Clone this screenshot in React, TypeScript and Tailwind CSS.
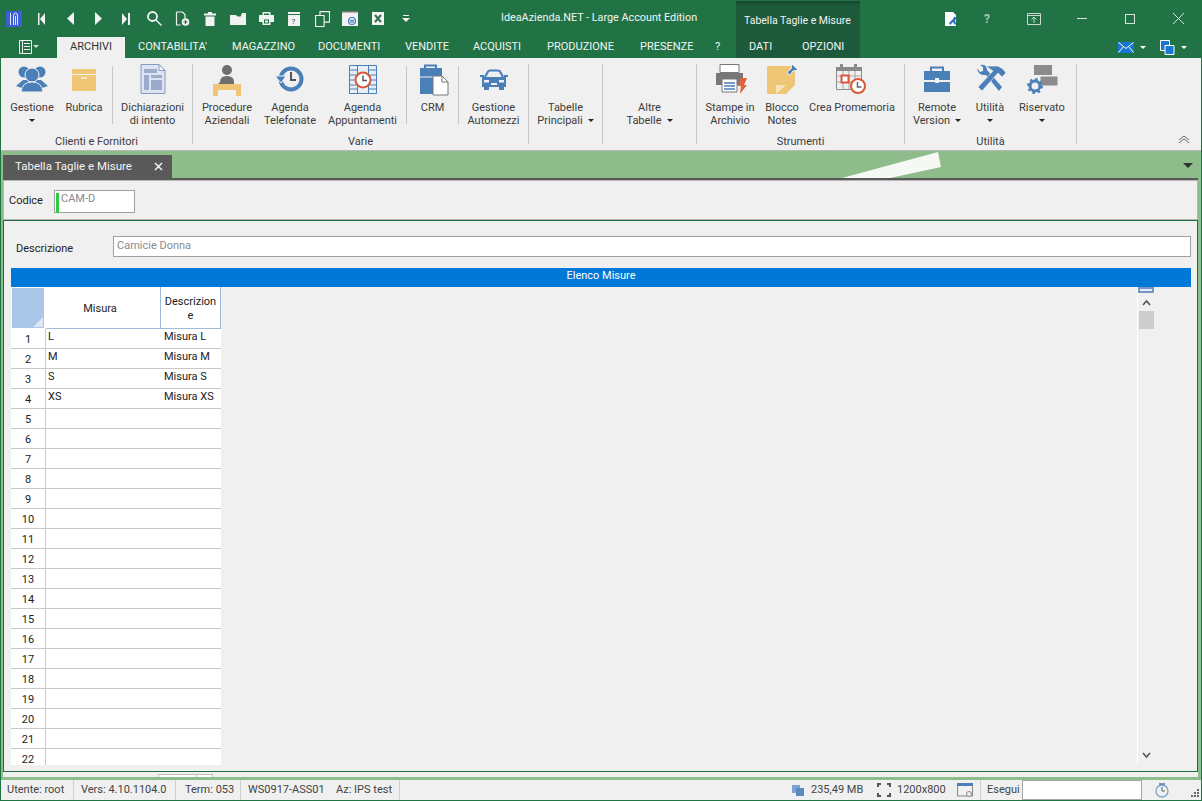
import type { ReactNode } from "react";

const font = "font-['Roboto',sans-serif]";

function Arrow({ className = "" }: { className?: string }) {
  return (
    <span
      className={`inline-block h-0 w-0 border-x-[3px] border-t-[3px] border-x-transparent border-t-[#222] ${className}`}
    />
  );
}

function Slot({ children }: { children: ReactNode }) {
  return <div className="flex h-[37px] w-[28px] items-center justify-center">{children}</div>;
}

function W({ children, w = 20, h = 20 }: { children: ReactNode; w?: number; h?: number }) {
  return (
    <svg width={w} height={h} viewBox={`0 0 ${w} ${h}`} fill="#f2f2f2">
      {children}
    </svg>
  );
}

function TitleIcons() {
  return (
    <>
      <Slot>
        <W w={8} h={14}>
          <path d="M0 1h1.500v12H0zM7 1v12L2 7z" />
        </W>
      </Slot>
      <Slot>
        <W w={7} h={13}>
          <path d="M7 0v13L0 6.500z" />
        </W>
      </Slot>
      <Slot>
        <W w={7} h={13}>
          <path d="M0 0v13l7-6.500z" />
        </W>
      </Slot>
      <Slot>
        <W w={8} h={14}>
          <path d="M0 1v12l5-6zM6 1h2v12H6z" />
        </W>
      </Slot>
      <Slot>
        <W w={15} h={15}>
          <circle cx="5.500" cy="5.500" r="4.500" fill="none" stroke="#f2f2f2" strokeWidth="1.800" />
          <path d="M8.500 9.500l1-1 5.500 5.500-1 1z" />
        </W>
      </Slot>
      <Slot>
        <W w={15} h={15}>
          <path d="M1.500 1h6l2.500 2.500v4M1.500 1v13h4" fill="none" stroke="#f2f2f2" strokeWidth="1.200" />
          <circle cx="10.500" cy="11" r="3.800" />
          <path d="M10.500 9v4M8.500 11h4" stroke="#217346" strokeWidth="1.100" />
        </W>
      </Slot>
      <Slot>
        <W w={12} h={14}>
          <path d="M4 0h4v1.500h4V3.500H0V1.500h4zM1.500 4.500h9V14h-9z" />
        </W>
      </Slot>
      <Slot>
        <W w={16} h={13}>
          <path d="M0 3h6l1.500 1.500h3L12 1h4v12H0z" />
        </W>
      </Slot>
      <Slot>
        <W w={15} h={13}>
          <path d="M3.500 0h8v3H15v7h-3.500v3h-8v-3H0V3h3.500z" />
          <path d="M5 1.500h5V3H5zM5 7.500h5v4H5z" fill="#217346" />
          <path d="M6 8.500h3v2H6z" />
        </W>
      </Slot>
      <Slot>
        <W w={14} h={15}>
          <path d="M1 1h12v14H1z" />
          <path d="M1 3h12v1H1z" fill="#217346" />
          <text x="4.500" y="13" fontSize="8" fill="#444">?</text>
        </W>
      </Slot>
      <Slot>
        <W w={15} h={16}>
          <path d="M.6 4.500h8.500v11H.6zM5 4V.6h5.500l4 0v10.500H9.500" fill="none" stroke="#f2f2f2" strokeWidth="1.100" />
        </W>
      </Slot>
      <Slot>
        <W w={16} h={15}>
          <path d="M0 0h16v15H0z" />
          <path d="M0 0h16v1.500H0z" fill="#777" />
          <circle cx="10" cy="10" r="3.500" fill="#dce8f5" stroke="#4a7fb8" strokeWidth="1.200" />
          <path d="M8 9.500h4M8 11h4" stroke="#4a7fb8" />
        </W>
      </Slot>
      <Slot>
        <W w={12} h={13}>
          <path d="M0 0h12v13H0z" />
          <path d="M3 3l6 7M9 3l-6 7" stroke="#2f6e4e" strokeWidth="2" />
        </W>
      </Slot>
      <Slot>
        <W w={8} h={8}>
          <path d="M1 0h6v1H1zM0 3h8L4 7z" />
        </W>
      </Slot>
    </>
  );
}

const tabs = [
  { label: "CONTABILITA'", w: "w-[94px]" },
  { label: "MAGAZZINO", w: "w-[86px]" },
  { label: "DOCUMENTI", w: "w-[87px]" },
  { label: "VENDITE", w: "w-[68px]" },
  { label: "ACQUISTI", w: "w-[74px]" },
  { label: "PRODUZIONE", w: "w-[93px]" },
  { label: "PRESENZE", w: "w-[75px]" },
  { label: "?", w: "w-[8px]" },
];

function Header() {
  return (
    <div className="flex h-[58px] bg-[#217346] text-[11px] text-[#f3f3f3]">
      <div className="w-[736px]">
        <div className="flex h-[37px] items-center">
          <div className="ml-[6px] flex h-[16px] w-[16px] items-center justify-center bg-[#3d5fd6]">
            <svg width="12" height="14" viewBox="0 0 12 14" fill="none" stroke="#dfe6ff" strokeWidth="1">
              <path d="M2.500 1v12M5.500 13V4q0-3 2-3t2 3v9M7.500 4v9" />
            </svg>
          </div>
          <div className="ml-[6px] flex">
            <TitleIcons />
          </div>
          <span className="ml-[81px] whitespace-nowrap text-[10.8px]">IdeaAzienda.NET - Large Account Edition</span>
        </div>
        <div className="flex h-[21px] items-end">
          <div className="ml-[19px] flex h-[21px] w-[38px] items-center gap-[1px] pb-[2px]">
            <svg width="13" height="14" viewBox="0 0 13 14" fill="none" stroke="#f2f2f2">
              <path d="M.5.5h12v13H.5zM3.500 0v14M5 3.500h6M5 6.500h6M5 9.500h6" />
            </svg>
            <Arrow className="border-t-[#cfe0d6]" />
          </div>
          <div className="flex h-[21px] w-[68px] items-center justify-center bg-[#f0f0f0] text-[#333]">ARCHIVI</div>
          <div className="ml-[13px] flex h-[21px] items-center">
            {tabs.map((t) => (
              <span key={t.label} className={`${t.w} whitespace-nowrap`}>
                {t.label}
              </span>
            ))}
          </div>
        </div>
      </div>
      <div className="mt-[1px] w-[124px] border-t-[3px] border-[#174f33] bg-[#1d5a3b]">
        <div className="flex h-[33px] items-center whitespace-nowrap pl-[8px] text-[10.5px]">Tabella Taglie e Misure</div>
        <div className="flex h-[21px] items-center pl-[13px]">
          <span className="w-[53px]">DATI</span>
          <span>OPZIONI</span>
        </div>
      </div>
      <div className="flex-1">
        <div className="flex h-[37px] items-center">
          <div className="ml-[77px] flex w-[28px] justify-center">
            <svg width="14" height="16" viewBox="0 0 14 16">
              <path d="M1 1h8l3 3v11H1z" fill="#fff" />
              <path d="M5 12l4-4 1-2 3 0-1 2-1 1 1 4-1 1-2-3-3 3z" fill="#2f6fc4" />
            </svg>
          </div>
          <span className="ml-[8px] flex w-[28px] justify-center text-[12px] font-bold text-[#a9c8b6]">?</span>
          <div className="ml-[19px] flex w-[28px] justify-center">
            <svg width="14" height="12" viewBox="0 0 14 12" fill="none" stroke="#c7dccf">
              <path d="M.5.5h13v11H.5zM.5 2.500h13M7 10V4M4.500 6.500L7 4l2.500 2.500" />
            </svg>
          </div>
          <div className="ml-[10px] flex">
            <div className="flex h-[30px] w-[48px] items-center justify-center">
              <span className="h-px w-[10px] bg-[#d5e6db]" />
            </div>
            <div className="flex h-[30px] w-[48px] items-center justify-center">
              <span className="h-[10px] w-[10px] border border-[#d5e6db]" />
            </div>
            <div className="flex h-[30px] w-[48px] items-center justify-center">
              <svg width="11" height="11" viewBox="0 0 11 11" stroke="#d5e6db">
                <path d="M0 0l11 11M11 0L0 11" />
              </svg>
            </div>
          </div>
        </div>
        <div className="flex h-[21px] items-start pl-[258px] pt-[5px]">
          <svg width="16" height="11" viewBox="0 0 16 11">
            <path d="M0 0h16v11H0z" fill="#1777d1" />
            <path d="M.5.5l7.500 6 7.500-6M.5 10.500l5-6M15.500 10.500l-5-6" fill="none" stroke="#fff" />
          </svg>
          <Arrow className="ml-[6px] mt-[4px] border-t-white" />
          <svg className="ml-[14px] -mt-[2px]" width="15" height="15" viewBox="0 0 15 15">
            <path d="M.5.5h9v10h-9z" fill="#1777d1" stroke="#fff" />
            <path d="M5 5.500h9v9H5z" fill="#1777d1" stroke="#fff" />
          </svg>
          <Arrow className="ml-[6px] mt-[4px] border-t-white" />
        </div>
      </div>
    </div>
  );
}

const blue = "#4a7fb8";
const gold = "#efc676";

function Svg({ children }: { children: ReactNode }) {
  return (
    <svg width="34" height="34" viewBox="0 0 34 34">
      {children}
    </svg>
  );
}

const icons: Record<string, ReactNode> = {
  gestione: (
    <Svg>
      <circle cx="9" cy="10" r="5.500" fill={blue} />
      <circle cx="25" cy="10" r="5.500" fill={blue} />
      <path d="M1 24l7-6h18l7 6-6 2H7z" fill={blue} />
      <circle cx="17" cy="13" r="7" fill={blue} stroke="#f0f0f0" />
      <path d="M6 30q1-10 11-10t11 10z" fill={blue} stroke="#f0f0f0" />
    </Svg>
  ),
  rubrica: (
    <Svg>
      <path d="M5 7h24v5H5z" fill={gold} />
      <path d="M5 13h24v16H5z" fill={gold} />
      <path d="M14 15h6v2h-6z" fill="#f6e8c8" />
    </Svg>
  ),
  dichiarazioni: (
    <Svg>
      <path d="M5 2.500h18l6 6v23H5z" fill="#dde3f2" stroke="#8a9ac4" />
      <path d="M23 2.500v6h6z" fill="#fff" stroke="#8a9ac4" />
      <path d="M8 7h13v4H8zM8 13h5v15H8zM15 13h11v3H15zM15 18h11v10H15z" fill="#9cabcc" />
    </Svg>
  ),
  procedure: (
    <Svg>
      <circle cx="17" cy="8" r="5" fill="#6e6e6e" />
      <path d="M10 20q0-6 7-6t7 6v2H8z" fill="#6e6e6e" />
      <path d="M3 22h28v12h-5v-6H8v6H3z" fill={gold} />
    </Svg>
  ),
  telefonate: (
    <Svg>
      <circle cx="18" cy="17" r="10.500" fill="none" stroke={blue} strokeWidth="4" />
      <path d="M2 14h11l-5 7z" fill={blue} stroke="#f0f0f0" />
      <path d="M18 10v8h5" fill="none" stroke="#555" strokeWidth="2" />
    </Svg>
  ),
  appuntamenti: (
    <Svg>
      <path d="M3.500 3.500h27v28h-27z" fill="#e8eef6" stroke={blue} />
      <path d="M3.500 8h8M3.500 13h8M3.500 18h8M3.500 23h8M3.500 27h8M22.500 8h8M22.500 13h8M22.500 18h8M22.500 23h8M22.500 27h8M11.500 3v29M22.500 3v29" stroke={blue} />
      <circle cx="17" cy="18" r="7.500" fill="#fff" stroke="#d9583a" strokeWidth="2" />
      <path d="M17 13.500V18.500h4" fill="none" stroke="#555" strokeWidth="1.500" />
    </Svg>
  ),
  crm: (
    <Svg>
      <path d="M9 6V3.500h11V6" fill="none" stroke={blue} strokeWidth="2" />
      <path d="M4 6h22v26H4z" fill={blue} />
      <path d="M4 15h22" stroke="#f0f0f0" />
      <path d="M17 14h9l6 6v13H17z" fill="#fff" stroke="#777" />
      <path d="M26 14v6h6" fill="none" stroke="#777" />
    </Svg>
  ),
  auto: (
    <Svg>
      <path d="M8 15l3-5.500q.5-1 2-1h8q1.500 0 2 1l3 5.500" fill="none" stroke={blue} strokeWidth="2.200" />
      <path d="M3 13h4v2H3zM27 13h4v2h-4z" fill={blue} />
      <path d="M5 15h24v10H5z" fill={blue} />
      <path d="M7 25h5v3H7zM22 25h5v3h-5z" fill={blue} />
      <path d="M7 18h5v2.500H7zM22 18h5v2.500h-5zM14 21h6v2h-6z" fill="#f0f0f0" />
    </Svg>
  ),
  stampe: (
    <Svg>
      <path d="M7 2.500h19v8H7z" fill="#fff" stroke="#777" />
      <path d="M3 11h27v12H3z" fill="#777" />
      <path d="M9 17h15v13H9z" fill="#fff" stroke="#777" />
      <path d="M11 21h11M11 24h11M11 27h11" stroke={blue} strokeWidth="1.500" />
      <path d="M27 16h7l-3 7h3l-7 9 1-8h-3z" fill="#e0613c" />
    </Svg>
  ),
  blocco: (
    <Svg>
      <path d="M2 4h28v19l-9 9H2z" fill={gold} />
      <path d="M11 32v-9h10z" fill="#f7e4ba" />
      <path d="M22 10l4-3 1-5 6 6-5 1-3 4-1 0-2-3z" fill={blue} stroke="#f0f0f0" />
    </Svg>
  ),
  promemoria: (
    <Svg>
      <path d="M1.500 5.500h25v22h-25z" fill="none" stroke="#8a8a8a" />
      <path d="M1 5h26v4H1z" fill="#8a8a8a" />
      <path d="M5 2h3v5H5zM19 2h3v5h-3z" fill="#8a8a8a" />
      <path d="M8 9v19M14 9v19M20 9v19M1 14h26M1 20h26" stroke="#a5a5a5" />
      <path d="M6.500 13.500h7v7h-7z" fill="#fff" stroke="#d9583a" strokeWidth="2" />
      <circle cx="23" cy="24" r="7" fill="#fff" stroke="#d9583a" strokeWidth="2" />
      <path d="M22.500 20v5h4" fill="none" stroke="#666" strokeWidth="1.500" />
    </Svg>
  ),
  remote: (
    <Svg>
      <path d="M11 10V5.500h12V10" fill="none" stroke={blue} strokeWidth="2" />
      <path d="M4 9h26v9H4zM4 20h26v10H4z" fill={blue} />
      <path d="M15 16h4v5h-4z" fill="#f0f0f0" />
    </Svg>
  ),
  utilita: (
    <Svg>
      <path d="M4 6l3 4 3-1 0-4-3-2q7-1 7 5l15 17-3 4L13 13q-8 1-9-7z" fill={blue} />
      <path d="M14 4h11l5 3 3 4-4 4-4-4L9 29l-4-4L20 9l-6-4z" fill={blue} stroke="#f0f0f0" strokeWidth="0.700" />
    </Svg>
  ),
  riservato: (
    <Svg>
      <path d="M9 3h18v10H9z" fill="#8c8c8c" />
      <path d="M15 14h18v10H15z" fill="#8c8c8c" stroke="#f0f0f0" />
      <circle cx="10" cy="24" r="5" fill="none" stroke={blue} strokeWidth="3" />
      <circle cx="10" cy="24" r="7" fill="none" stroke={blue} strokeWidth="2" strokeDasharray="2.500 3" />
    </Svg>
  ),
};

function RibbonButton({
  icon,
  lines,
  width,
  arrow,
}: {
  icon?: string;
  lines: string[];
  width: string;
  arrow?: "below" | "inline";
}) {
  return (
    <div className={`${width} flex flex-col items-center pt-[4px] text-center text-[11px] leading-[13px] text-[#3c3c3c]`}>
      <div className="flex h-[34px] w-[34px] items-center justify-center">{icon ? icons[icon] : null}</div>
      <div className="mt-[5px] whitespace-nowrap">
        {lines.map((l, i) => (
          <div key={l}>
            {l}
            {arrow === "inline" && i === lines.length - 1 && <Arrow className="mb-[2px] ml-[5px]" />}
          </div>
        ))}
        {arrow === "below" && (
          <div className="flex h-[13px] items-center justify-center">
            <Arrow />
          </div>
        )}
      </div>
    </div>
  );
}

function Group({ label, width, children }: { label?: string; width: string; children: ReactNode }) {
  return (
    <div className={`${width} flex h-[92px] flex-col`}>
      <div className="flex h-[77px]">{children}</div>
      <div className="text-center text-[11px] leading-[14px] text-[#3c3c3c]">{label}</div>
    </div>
  );
}

function Sep() {
  return <div className="mt-[6px] h-[80px] w-px bg-[#c6c6c6]" />;
}

function ShortSep() {
  return <div className="mt-[8px] h-[58px] w-px shrink-0 bg-[#c6c6c6]" />;
}

function Ribbon() {
  return (
    <div className="flex h-[92px] border-x border-[#217346] bg-[#f0f0f0]">
      <Group label="Clienti e Fornitori" width="w-[191px]">
        <div className="w-[5px]" />
        <RibbonButton icon="gestione" lines={["Gestione"]} width="w-[52px]" arrow="below" />
        <RibbonButton icon="rubrica" lines={["Rubrica"]} width="w-[52px]" />
        <div className="w-[2px]" />
        <ShortSep />
        <RibbonButton icon="dichiarazioni" lines={["Dichiarazioni", "di intento"]} width="w-[79px]" />
      </Group>
      <Sep />
      <Group label="Varie" width="w-[335px]">
        <RibbonButton icon="procedure" lines={["Procedure", "Aziendali"]} width="w-[68px]" />
        <RibbonButton icon="telefonate" lines={["Agenda", "Telefonate"]} width="w-[58px]" />
        <RibbonButton icon="appuntamenti" lines={["Agenda", "Appuntamenti"]} width="w-[87px]" />
        <ShortSep />
        <RibbonButton icon="crm" lines={["CRM"]} width="w-[51px]" />
        <ShortSep />
        <RibbonButton icon="auto" lines={["Gestione", "Automezzi"]} width="w-[69px]" />
      </Group>
      <Sep />
      <Group width="w-[73px]">
        <RibbonButton lines={["Tabelle", "Principali"]} width="w-[73px]" arrow="inline" />
      </Group>
      <Sep />
      <Group width="w-[93px]">
        <RibbonButton lines={["Altre", "Tabelle"]} width="w-[93px]" arrow="inline" />
      </Group>
      <Sep />
      <Group label="Strumenti" width="w-[207px]">
        <RibbonButton icon="stampe" lines={["Stampe in", "Archivio"]} width="w-[66px]" />
        <RibbonButton icon="blocco" lines={["Blocco", "Notes"]} width="w-[38px]" />
        <RibbonButton icon="promemoria" lines={["Crea Promemoria"]} width="w-[102px]" />
      </Group>
      <Sep />
      <Group label="Utilità" width="w-[171px]">
        <RibbonButton icon="remote" lines={["Remote", "Version"]} width="w-[64px]" arrow="inline" />
        <RibbonButton icon="utilita" lines={["Utilità"]} width="w-[42px]" arrow="below" />
        <RibbonButton icon="riservato" lines={["Riservato"]} width="w-[62px]" arrow="below" />
      </Group>
      <Sep />
      <div className="flex flex-1 items-end justify-end pb-[6px] pr-[11px]">
        <svg width="12" height="9" viewBox="0 0 12 9" fill="none" stroke="#666">
          <path d="M1 5l5-4 5 4M1 8l5-4 5 4" />
        </svg>
      </div>
    </div>
  );
}

const rows = Array.from({ length: 22 }, (_, i) => i + 1);
const cells: Record<number, [string, string]> = {
  1: ["L", "Misura L"],
  2: ["M", "Misura M"],
  3: ["S", "Misura S"],
  4: ["XS", "Misura XS"],
};

function Grid() {
  return (
    <div className="h-[478px] w-[210px] overflow-hidden text-[11px] text-[#222]">
      <div className="flex h-[42px] bg-white">
        <div className="relative w-[35px] border border-white border-r-2 bg-[#a9c6e8]">
          <div className="absolute bottom-[1px] right-[1px] h-0 w-0 border-b-[10px] border-l-[10px] border-b-[#dce8f5] border-l-transparent" />
        </div>
        <div className="flex w-[115px] items-center justify-center border-b border-r border-[#9dbad8] pr-[6px] pt-[3px]">Misura</div>
        <div className="flex w-[60px] items-center justify-center border-b border-r border-[#9dbad8] pt-[3px] text-center leading-[14px]">
          <span>
            Descrizion
            <br />e
          </span>
        </div>
      </div>
      {rows.map((n) => (
        <div key={n} className="flex h-[20px] border-b border-[#c8c8c8] bg-white">
          <div className="w-[35px] border-r border-[#c8c8c8] pt-[5px] text-center leading-[11px]">{n}</div>
          <div className="w-[115px] pl-[2px] pt-[1px] leading-[14px]">{cells[n]?.[0]}</div>
          <div className="w-[60px] pl-[3px] pt-[1px] leading-[14px]">{cells[n]?.[1]}</div>
        </div>
      ))}
    </div>
  );
}

function Scroller() {
  return (
    <div className="ml-[916px] flex h-[478px] w-[17px] flex-col items-center border-l border-white">
      <div className="h-[6px] w-[16px] border-2 border-[#7396c4] bg-[#e8eef6]" />
      <svg className="mt-[6px]" width="9" height="7" viewBox="0 0 9 7" fill="none" stroke="#555" strokeWidth="1.600">
        <path d="M1 6l3.500-4L8 6" />
      </svg>
      <div className="mt-[5px] h-[18px] w-[15px] bg-[#cdcdcd]" />
      <div className="flex-1" />
      <svg className="mb-[6px]" width="9" height="7" viewBox="0 0 9 7" fill="none" stroke="#555" strokeWidth="1.600">
        <path d="M1 1l3.500 4L8 1" />
      </svg>
    </div>
  );
}

function Body() {
  return (
    <div className="flex-1 border-x border-[#217346] bg-[#8fbc8b] pl-[2px] pr-[3px]">
      <div className="relative flex h-[27px] items-end">
        <div className="flex h-[23px] w-[169px] items-center bg-[#595959] pl-[12px] text-[11.5px] text-[#f4f4f4]">
          Tabella Taglie e Misure
          <svg className="ml-[22px]" width="9" height="9" viewBox="0 0 9 9" stroke="#f4f4f4" strokeWidth="1.500">
            <path d="M1 1l7 7M8 1L1 8" />
          </svg>
        </div>
        <svg className="absolute left-[839px] top-[1px]" width="102" height="26" viewBox="0 0 102 26">
          <path d="M96 0l3 15L48 26H0z" fill="#f5f8f3" />
        </svg>
        <Arrow className="absolute right-[5px] top-[12px] border-x-[5px] border-t-[5px] border-t-[#333]" />
      </div>
      <div className="h-[599px] border-t-2 border-[#5a5a5a] bg-[#f0f0f0] text-[11px] text-[#222]">
        <div className="flex h-[40px] items-center border border-[#b5b5b5] pl-[5px]">
          <span className="w-[45px] pt-[2px]">Codice</span>
          <div className="mt-[2px] flex h-[23px] w-[81px] border border-[#a0a0a0] bg-white pl-[1px] pt-[1px] leading-[14px] text-[#8a8a8a]">
            <span className="mr-[2px] mt-[1px] h-[20px] w-[3px] bg-[#2ecc40]" />
            CAM-D
          </div>
        </div>
        <div className="h-[552px] border border-[#1f6b42] pl-[7px]">
          <div className="flex h-[47px] items-center pt-[4px]">
            <span className="ml-[5px] mt-[5px] w-[97px]">Descrizione</span>
            <div className="h-[21px] w-[1078px] border border-[#a0a0a0] bg-white pl-[3px] pt-[1px] text-[#8a8a8a]">
              Camicie Donna
            </div>
          </div>
          <div className="h-[19px] w-[1180px] bg-[#0078d7] text-center text-[11px] leading-[16px] text-white">
            Elenco Misure
          </div>
          <div className="flex">
            <Grid />
            <Scroller />
          </div>
        </div>
        <div className="flex h-[5px] items-end pl-[155px]">
          <div className="h-[3px] w-[39px] border-x border-t border-[#bdbdbd] bg-white" />
          <div className="h-[3px] w-[16px] border-r border-t border-[#bdbdbd] bg-white" />
        </div>
      </div>
    </div>
  );
}

function StatusCell({ children, width }: { children: ReactNode; width: string }) {
  return <div className={`${width} flex h-[20px] items-center whitespace-nowrap border-r border-[#cfcfcf] pl-[6px]`}>{children}</div>;
}

function StatusBar() {
  return (
    <div className="flex h-[21px] items-center border-x border-b border-[#217346] bg-[#f0f0f0] text-[11px] text-[#444]">
      <StatusCell width="w-[73px]">
        <span>Utente: root</span>
      </StatusCell>
      <StatusCell width="w-[102px]">
        <span className="ml-[1px]">Vers: 4.10.1104.0</span>
      </StatusCell>
      <StatusCell width="w-[65px]">
        <span className="ml-[3px]">Term: 053</span>
      </StatusCell>
      <StatusCell width="w-[159px]">
        <span className="ml-[1px] w-[88px]">WS0917-ASS01</span>
        <span>Az: IPS test</span>
      </StatusCell>
      <svg className="ml-[392px]" width="13" height="12" viewBox="0 0 13 12">
        <path d="M0 1h8v8H0z" fill="#7ea3cf" />
        <path d="M4 4h8v8H4z" fill="#5b8ac2" />
      </svg>
      <span className="ml-[6px] w-[66px]">235,49 MB</span>
      <svg width="14" height="14" viewBox="0 0 14 14" fill="none" stroke="#555" strokeWidth="2">
        <path d="M1 4V1h3M10 1h3v3M13 10v3h-3M4 13H1v-3" />
      </svg>
      <span className="ml-[6px] w-[60px]">1200x800</span>
      <svg width="16" height="14" viewBox="0 0 16 14" fill="none">
        <path d="M.5.5h15v12.500H.5z" stroke="#888" />
        <path d="M0 0h16v3H0z" fill="#4a7fb8" />
        <circle cx="12" cy="11" r="2.500" fill="#f0f0f0" stroke="#888" />
      </svg>
      <div className="ml-[7px] h-[20px] w-px bg-[#cfcfcf]" />
      <span className="ml-[6px] w-[35px]">Esegui</span>
      <div className="h-[20px] w-[120px] border border-[#a8a8a8] bg-white" />
      <svg className="ml-[13px]" width="14" height="17" viewBox="0 0 14 17" fill="none">
        <circle cx="7" cy="9" r="6" stroke="#7ea3cf" strokeWidth="1.300" />
        <path d="M7 5v4h3" stroke="#666" />
        <path d="M4 2h6" stroke="#4a7fb8" strokeWidth="1.500" />
      </svg>
      <svg className="ml-[21px] mt-[8px]" width="10" height="10" viewBox="0 0 10 10" fill="#666">
        <path d="M7 0h2v2H7zM4 3h2v2H4zM7 3h2v2H7zM1 6h2v2H1zM4 6h2v2H4zM7 6h2v2H7z" />
      </svg>
    </div>
  );
}

export default function App() {
  return (
    <div className={`${font} flex h-[801px] w-[1202px] flex-col overflow-hidden bg-[#217346]`}>
      <Header />
      <Ribbon />
      <div className="h-px border-x border-[#217346] bg-[#b8b8b8]" />
      <Body />
      <StatusBar />
    </div>
  );
}
